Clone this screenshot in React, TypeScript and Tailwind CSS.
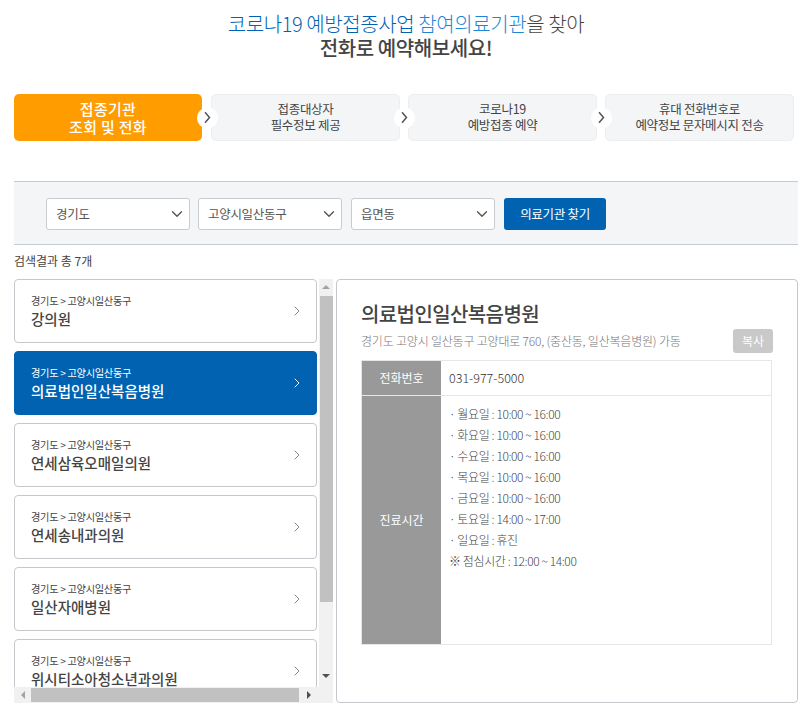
import React from 'react';
import { ChevronDown, ChevronRight } from 'lucide-react';

const font = 'font-["Noto_Sans_CJK_KR","Noto_Sans",sans-serif]';

const steps = [
  ['접종대상자', '필수정보 제공'],
  ['코로나19', '예방접종 예약'],
  ['휴대 전화번호로', '예약정보 문자메시지 전송'],
];

const clinics = ['강의원', '의료법인일산복음병원', '연세삼육오매일의원', '연세송내과의원', '일산자애병원', '위시티소아청소년과의원'];

const hours = [
  '· 월요일 : 10:00 ~ 16:00',
  '· 화요일 : 10:00 ~ 16:00',
  '· 수요일 : 10:00 ~ 16:00',
  '· 목요일 : 10:00 ~ 16:00',
  '· 금요일 : 10:00 ~ 16:00',
  '· 토요일 : 14:00 ~ 17:00',
  '· 일요일 : 휴진',
  '※ 점심시간 : 12:00 ~ 14:00',
];

const StepArrow = () => (
  <span className="absolute right-[-16px] top-1/2 z-10 flex h-[21px] w-[21px] -translate-y-1/2 items-center justify-center rounded-full bg-white">
    <svg width="7" height="12" viewBox="0 0 7 12" fill="none" stroke="#555" strokeWidth="1.5">
      <path d="M1 .8 5.5 6 1 11.2" />
    </svg>
  </span>
);

const Select = ({ label, width }: { label: string; width: string }) => (
  <div className={`flex h-[32px] items-center justify-between rounded-[3px] border border-[#c8ccd0] bg-white pl-[9px] pr-[3px] text-[12.5px] tracking-[-0.3px] text-[#555] ${width}`}>
    <span>{label}</span>
    <ChevronDown size={18} strokeWidth={1.8} className="text-[#555]" />
  </div>
);

const ClinicItem = ({ name, active }: { name: string; active: boolean }) => (
  <div
    className={`flex h-[64px] w-[303px] shrink-0 items-center justify-between rounded-[4px] border pl-[16px] pr-[11px] ${
      active ? 'border-[#0062b1] bg-[#0062b1] text-white' : 'border-[#c4c8cc] bg-white text-[#444]'
    }`}
  >
    <div className="flex flex-col">
      <span className="text-[10.2px] leading-[14px] tracking-[-0.3px]">경기도 &gt; 고양시일산동구</span>
      <span className="mt-[1px] text-[14.5px] font-medium leading-[20px]">{name}</span>
    </div>
    <ChevronRight size={16} strokeWidth={1.5} className={active ? 'text-white' : 'text-[#888]'} />
  </div>
);

export default function App() {
  return (
    <div className={`flex h-[712px] w-[812px] flex-col overflow-hidden bg-white ${font}`}>
      <div className="flex h-[94px] flex-col items-center pt-[12px] text-center">
        <h1 className="text-[20px] font-light leading-[24px] tracking-[-0.4px] text-[#444]">
          <span className="text-[#0062b1]">코로나19 예방접종사업 </span>
          <span className="text-[#1d86d8]">참여의료기관</span>을 찾아
        </h1>
        <p className="text-[20px] font-medium leading-[24px] tracking-[-0.4px] text-[#444]">전화로 예약해보세요!</p>
      </div>

      <div className="flex gap-[8px] pl-[14px]">
        <div className="relative mr-[1px] flex h-[47px] w-[188px] flex-col items-center justify-center rounded-[5px] bg-[#ff9c00] text-[15px] font-medium leading-[18px] tracking-[0.3px] text-white">
          <span>접종기관</span>
          <span>조회 및 전화</span>
          <StepArrow />
        </div>
        {steps.map((s, i) => (
          <div key={s[0]} className="relative flex h-[47px] w-[189px] flex-col items-center justify-center rounded-[5px] border border-[#eceef0] bg-[#f4f5f7] pb-[2px] text-[12.5px] leading-[16px] tracking-[-0.3px] text-[#444]">
            <span>{s[0]}</span>
            <span>{s[1]}</span>
            {i < 2 && <StepArrow />}
          </div>
        ))}
      </div>

      <div className="ml-[14px] mt-[40px] flex h-[64px] w-[784px] items-center border-y border-[#c8ccd0] bg-[#f4f5f7] pl-[32px] pt-[2px]">
        <Select label="경기도" width="w-[144px]" />
        <div className="w-[8px]" />
        <Select label="고양시일산동구" width="w-[144px]" />
        <div className="w-[9px]" />
        <Select label="읍면동" width="w-[144px]" />
        <button className="ml-[9px] h-[32px] w-[102px] rounded-[3px] bg-[#0062b1] text-[12.5px] tracking-[-0.3px] text-white">의료기관 찾기</button>
      </div>

      <p className="ml-[14px] mt-[7px] h-[27px] text-[12px] leading-[18px] text-[#444]">검색결과 총 7개</p>

      <div className="ml-[14px] flex h-[424px] w-[784px] gap-[3px]">
        <div className="flex w-[319px] flex-col">
          <div className="flex min-h-0 flex-1">
            <div className="flex w-[305px] flex-col gap-[8px] overflow-hidden">
              {clinics.map((c) => (
                <ClinicItem key={c} name={c} active={c === '의료법인일산복음병원'} />
              ))}
            </div>
            <div className="flex w-[14px] flex-col items-center bg-[#f1f1f1]">
              <span className="mt-[6px] h-0 w-0 border-x-[4px] border-b-[4px] border-x-transparent border-b-[#a3a3a3]" />
              <span className="mt-[7px] h-[306px] w-[13px] bg-[#c1c1c1]" />
              <span className="mt-[72px] h-0 w-0 border-x-[4px] border-t-[4px] border-x-transparent border-t-[#505050]" />
            </div>
          </div>
          <div className="flex h-[16px] items-center bg-[#f1f1f1]">
            <span className="flex w-[17px] justify-center">
              <span className="h-0 w-0 border-y-[4px] border-r-[4px] border-y-transparent border-r-[#a3a3a3]" />
            </span>
            <span className="h-[14px] w-[268px] bg-[#c1c1c1]" />
            <span className="flex w-[20px] justify-center">
              <span className="h-0 w-0 border-y-[4px] border-l-[4px] border-y-transparent border-l-[#505050]" />
            </span>
          </div>
        </div>
        <div className="flex w-[462px] flex-col rounded-[4px] border border-[#c4c8cc] bg-white pl-[24px] pr-[24px]">
          <h2 className="mt-[21px] text-[20px] font-medium leading-[26px] tracking-[-0.6px] text-[#444]">의료법인일산복음병원</h2>
          <div className="mt-[2px] flex items-center justify-between">
            <span className="text-[12px] font-light tracking-[-0.2px] text-[#777]">경기도 고양시 일산동구 고양대로 760, (중산동, 일산복음병원) 가동</span>
            <span className="flex h-[24px] w-[40px] items-center justify-center rounded-[3px] bg-[#c9c9c9] text-[12px] text-white">복사</span>
          </div>
          <div className="mt-[7px] w-[411px] border border-[#e6e6e6]">
            <div className="flex h-[35px] border-b border-[#e6e6e6]">
              <div className="flex w-[79px] items-center justify-center bg-[#999] text-[12px] text-white">전화번호</div>
              <div className="flex items-center pl-[8px] text-[12.5px] font-light text-[#333]">031-977-5000</div>
            </div>
            <div className="flex h-[248px]">
              <div className="flex w-[79px] items-center justify-center bg-[#999] text-[12px] text-white">진료시간</div>
              <div className="flex flex-col pl-[8px] pt-[7px] text-[12px] font-light leading-[21px] tracking-[-0.4px] text-[#444]">
                {hours.map((h) => (
                  <span key={h}>{h}</span>
                ))}
              </div>
            </div>
          </div>
        </div>
      </div>
    </div>
  );
}
